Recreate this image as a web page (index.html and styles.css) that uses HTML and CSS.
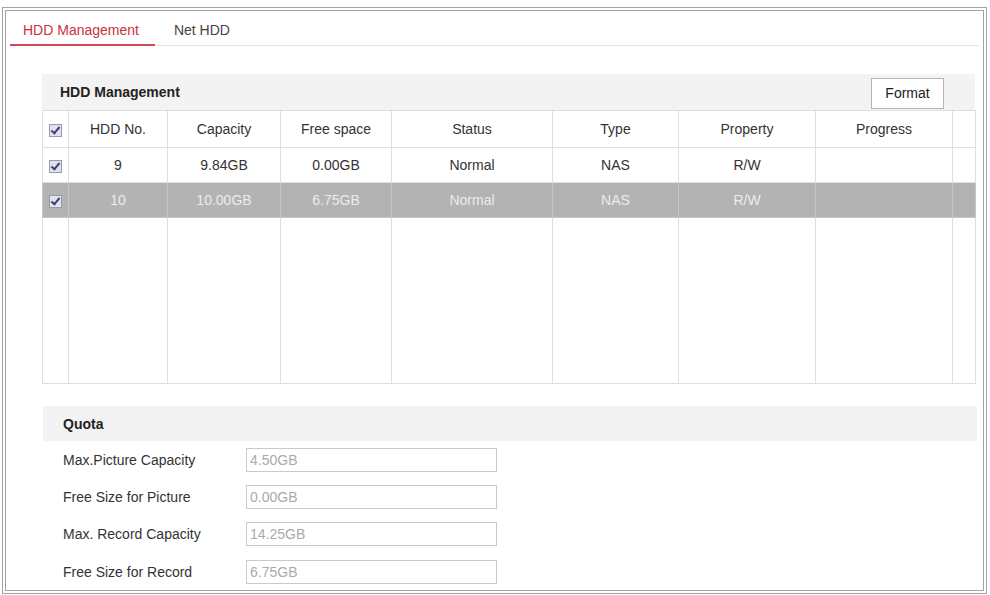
FILE: index.html
```html
<!DOCTYPE html>
<html lang="en">
<head>
    <meta charset="UTF-8">
    <meta name="viewport" content="width=device-width, initial-scale=1.0">
    <title>Storage</title>
    <link rel="stylesheet" href="styles.css">
</head>
<body>
    <div class="frame">
        <div class="tabs">
            <a class="tab active">HDD Management</a>
            <a class="tab">Net HDD</a>
        </div>

        <div class="section">
            <div class="section-head">
                <span>HDD Management</span>
                <button class="btn">Format</button>
            </div>
            <table class="hdd-table">
                <colgroup>
                    <col style="width:26px">
                    <col style="width:99px">
                    <col style="width:113px">
                    <col style="width:111px">
                    <col style="width:161px">
                    <col style="width:126px">
                    <col style="width:137px">
                    <col style="width:137px">
                    <col style="width:23px">
                </colgroup>
                <thead>
                    <tr>
                        <th class="chk"><span class="cb"></span></th>
                        <th>HDD No.</th>
                        <th>Capacity</th>
                        <th>Free space</th>
                        <th>Status</th>
                        <th>Type</th>
                        <th>Property</th>
                        <th>Progress</th>
                        <th></th>
                    </tr>
                </thead>
                <tbody>
                    <tr>
                        <td class="chk"><span class="cb"></span></td>
                        <td>9</td>
                        <td>9.84GB</td>
                        <td>0.00GB</td>
                        <td>Normal</td>
                        <td>NAS</td>
                        <td>R/W</td>
                        <td></td>
                        <td></td>
                    </tr>
                    <tr class="selected">
                        <td class="chk"><span class="cb"></span></td>
                        <td>10</td>
                        <td>10.00GB</td>
                        <td>6.75GB</td>
                        <td>Normal</td>
                        <td>NAS</td>
                        <td>R/W</td>
                        <td></td>
                        <td></td>
                    </tr>
                    <tr class="filler">
                        <td></td><td></td><td></td><td></td><td></td><td></td><td></td><td></td><td></td>
                    </tr>
                </tbody>
            </table>
        </div>

        <div class="section quota">
            <div class="section-head">
                <span>Quota</span>
            </div>
            <div class="form-row">
                <label>Max.Picture Capacity</label>
                <input type="text" value="4.50GB" disabled>
            </div>
            <div class="form-row">
                <label>Free Size for Picture</label>
                <input type="text" value="0.00GB" disabled>
            </div>
            <div class="form-row">
                <label>Max. Record Capacity</label>
                <input type="text" value="14.25GB" disabled>
            </div>
            <div class="form-row">
                <label>Free Size for Record</label>
                <input type="text" value="6.75GB" disabled>
            </div>
        </div>
    </div>
</body>
</html>
```

FILE: styles.css
```css
body {
    margin: 0;
    background: #fff;
    font-family: "Liberation Sans", Arial, sans-serif;
    font-size: 14px;
    color: #333;
}

.frame {
    margin: 7px 0 0 2px;
    width: 977px;
    height: 579px;
    border: 4px double #a2a2a2;
    overflow: hidden;
}

/* tab strip */
.tabs {
    display: flex;
    margin: 0 4px;
    height: 34px;
    border-bottom: 1px solid #e2e2e2;
}
.tab {
    display: flex;
    align-items: center;
    padding: 4px 16px 0 13px;
    color: #444;
    cursor: pointer;
}
.tab.active {
    color: #c9323d;
    border-bottom: 2px solid #d04a55;
    margin-bottom: -1px;
}
.tab + .tab {
    padding-left: 19px;
}

/* sections */
.section {
    margin: 28px 0 0 36px;
    width: 933px;
}
.section-head {
    display: flex;
    align-items: center;
    justify-content: space-between;
    height: 36px;
    padding: 0 31px 0 18px;
    background: #f3f3f3;
    font-weight: bold;
    color: #222;
}
.btn {
    font-family: inherit;
    font-size: 14px;
    color: #222;
    background: #fff;
    border: 1px solid #b5b5b5;
    width: 73px;
    height: 31px;
    padding: 0;
    margin-top: 2px;
}

/* disk list */
.hdd-table {
    width: 933px;
    table-layout: fixed;
    border-collapse: collapse;
    border: 1px solid #dadada;
}
.hdd-table th,
.hdd-table td {
    border: 1px solid #dedede;
    text-align: center;
    font-weight: normal;
    padding: 0;
    height: 34px;
    color: #333;
}
.hdd-table th {
    height: 36px;
}
.hdd-table tr.selected td {
    background: #b3b3b3;
    color: #ececec;
    border-color: #c6c6c6;
}
.hdd-table tr.filler td {
    height: 165px;
}

.cb {
    display: inline-block;
    width: 11px;
    height: 11px;
    vertical-align: middle;
    border: 1px solid #9a9aa4;
    background: #e2e2ec;
    position: relative;
}
.cb::after {
    content: "";
    position: absolute;
    left: 3px;
    top: 0px;
    width: 3px;
    height: 7px;
    border: solid #3c3c8e;
    border-width: 0 2px 2px 0;
    transform: rotate(40deg);
}

/* quota form */
.section.quota {
    margin-top: 22px;
    width: 934px;
    margin-left: 37px;
}
.quota .section-head {
    height: 35px;
    padding-left: 20px;
}
.form-row {
    display: flex;
    align-items: center;
    height: 37.3px;
    padding-left: 20px;
}
.form-row label {
    width: 183px;
    color: #333;
}
.form-row input {
    width: 251px;
    height: 24px;
    box-sizing: border-box;
    border: 1px solid #c9c9c9;
    background: #fff;
    padding: 0 3px;
    font-family: inherit;
    font-size: 14px;
    color: #aaa;
}
```
